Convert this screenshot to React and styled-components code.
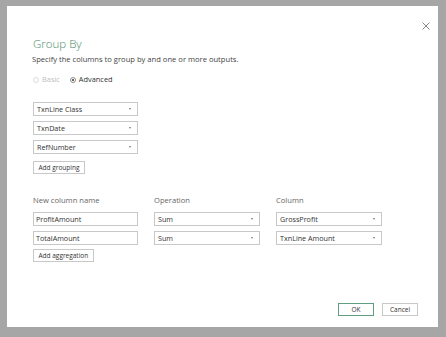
import React from "react";
import styled, { createGlobalStyle } from "styled-components";

const Global = createGlobalStyle`
  html, body { margin: 0; padding: 0; background: #a6a6a6; }
  body { font-family: "Open Sans", "Noto Sans", sans-serif; }
  * { box-sizing: border-box; }
`;

const Page = styled.div`
  width: 446px;
  height: 337px;
  padding: 6px 8px 10px 7px;
`;

const Dialog = styled.div`
  width: 431px;
  height: 321px;
  background: #fff;
  display: flex;
  flex-direction: column;
  padding: 0 20px 11px 26px;
`;

const TopBar = styled.div`
  height: 31px;
  display: flex;
  justify-content: flex-end;
  align-items: flex-start;
  margin-right: -12px;
  padding-top: 16px;
`;

const CloseButton = styled.button`
  width: 8px;
  height: 8px;
  padding: 0;
  border: 0;
  background: none;
  display: flex;
  cursor: pointer;
`;

const Title = styled.h1`
  margin: 0;
  font-size: 11.5px;
  line-height: 14px;
  font-weight: 300;
  color: #4a8a68;
`;

const Subtitle = styled.p`
  margin: 3px 0 0 -1px;
  font-size: 7.6px;
  line-height: 11px;
  color: #444;
`;

const RadioRow = styled.div`
  margin-top: 9px;
  display: flex;
  gap: 10px;
  height: 11px;
  align-items: center;
`;

const RadioLabel = styled.label`
  display: flex;
  align-items: center;
  gap: 3px;
  font-size: 7.4px;
  line-height: 11px;
  color: ${(p) => (p.$disabled ? "#bdbdbd" : "#333")};
`;

const RadioCircle = styled.span`
  width: 6px;
  height: 6px;
  border-radius: 50%;
  border: 1px solid ${(p) => (p.$disabled ? "#dcdcdc" : "#8a8a8a")};
  display: flex;
  align-items: center;
  justify-content: center;
  &::after {
    content: "";
    width: 2px;
    height: 2px;
    border-radius: 50%;
    background: ${(p) => (p.$checked ? "#333" : "transparent")};
  }
`;

const GroupList = styled.div`
  margin-top: 17px;
  display: flex;
  flex-direction: column;
  gap: 5px;
  width: 105px;
`;

const SelectBox = styled.div`
  height: 14px;
  width: ${(p) => p.$width || 105}px;
  border: 1px solid #c8c8c8;
  background: #fff;
  display: flex;
  align-items: center;
  justify-content: space-between;
  padding: 0 6px 0 3px;
  font-size: 7.2px;
  color: #333;
  white-space: nowrap;
`;

const Arrow = styled.span`
  width: 0;
  height: 0;
  border-left: 1.5px solid transparent;
  border-right: 1.5px solid transparent;
  border-top: 2px solid #777;
`;

const TextBox = styled.div`
  height: 14px;
  border: 1px solid #c8c8c8;
  display: flex;
  align-items: center;
  padding: 0 2px;
  font-size: 7.2px;
  color: #333;
  white-space: nowrap;
`;

const Button = styled.button`
  height: 13px;
  min-width: 36px;
  padding: 0 4.5px;
  border: 1px solid ${(p) => (p.$primary ? "#5f9e7e" : "#c8c8c8")};
  background: #fff;
  font-family: inherit;
  font-size: 6.5px;
  line-height: 11px;
  color: #333;
  display: flex;
  align-items: center;
  justify-content: center;
  white-space: nowrap;
`;

const AddGroupingButton = styled(Button)`
  margin-top: 7px;
  align-self: flex-start;
`;

const AggGrid = styled.div`
  margin-top: 21px;
  display: grid;
  grid-template-columns: 105px 106px 106px;
  column-gap: 16px;
  row-gap: 5.5px;
  align-items: center;
`;

const ColLabel = styled.div`
  font-size: 7.6px;
  line-height: 11px;
  color: #666;
`;

const AddAggButton = styled(Button)`
  margin-top: 4px;
  align-self: flex-start;
`;

const Footer = styled.div`
  margin-top: auto;
  display: flex;
  justify-content: flex-end;
  gap: 8px;
`;

const Select = ({ value, width }) => (
  <SelectBox $width={width}>
    <span>{value}</span>
    <Arrow />
  </SelectBox>
);

const groupings = ["TxnLine Class", "TxnDate", "RefNumber"];
const aggregations = [
  { name: "ProfitAmount", op: "Sum", col: "GrossProfit" },
  { name: "TotalAmount", op: "Sum", col: "TxnLine Amount" },
];

export default function App() {
  return (
    <>
      <Global />
      <Page>
        <Dialog>
          <TopBar>
            <CloseButton aria-label="Close">
              <svg width="8" height="8" viewBox="0 0 8 8">
                <path d="M0.5 0.5 L7.5 7.5 M7.5 0.5 L0.5 7.5" stroke="#7a7a7a" strokeWidth="0.9" fill="none" />
              </svg>
            </CloseButton>
          </TopBar>
          <Title>Group By</Title>
          <Subtitle>Specify the columns to group by and one or more outputs.</Subtitle>
          <RadioRow>
            <RadioLabel $disabled>
              <RadioCircle $disabled />
              Basic
            </RadioLabel>
            <RadioLabel>
              <RadioCircle $checked />
              Advanced
            </RadioLabel>
          </RadioRow>
          <GroupList>
            {groupings.map((g) => (
              <Select key={g} value={g} />
            ))}
          </GroupList>
          <AddGroupingButton>Add grouping</AddGroupingButton>
          <AggGrid>
            <ColLabel>New column name</ColLabel>
            <ColLabel>Operation</ColLabel>
            <ColLabel>Column</ColLabel>
            {aggregations.map((a) => (
              <React.Fragment key={a.name}>
                <TextBox>{a.name}</TextBox>
                <Select value={a.op} width={106} />
                <Select value={a.col} width={106} />
              </React.Fragment>
            ))}
          </AggGrid>
          <AddAggButton>Add aggregation</AddAggButton>
          <Footer>
            <Button $primary>OK</Button>
            <Button>Cancel</Button>
          </Footer>
        </Dialog>
      </Page>
    </>
  );
}
